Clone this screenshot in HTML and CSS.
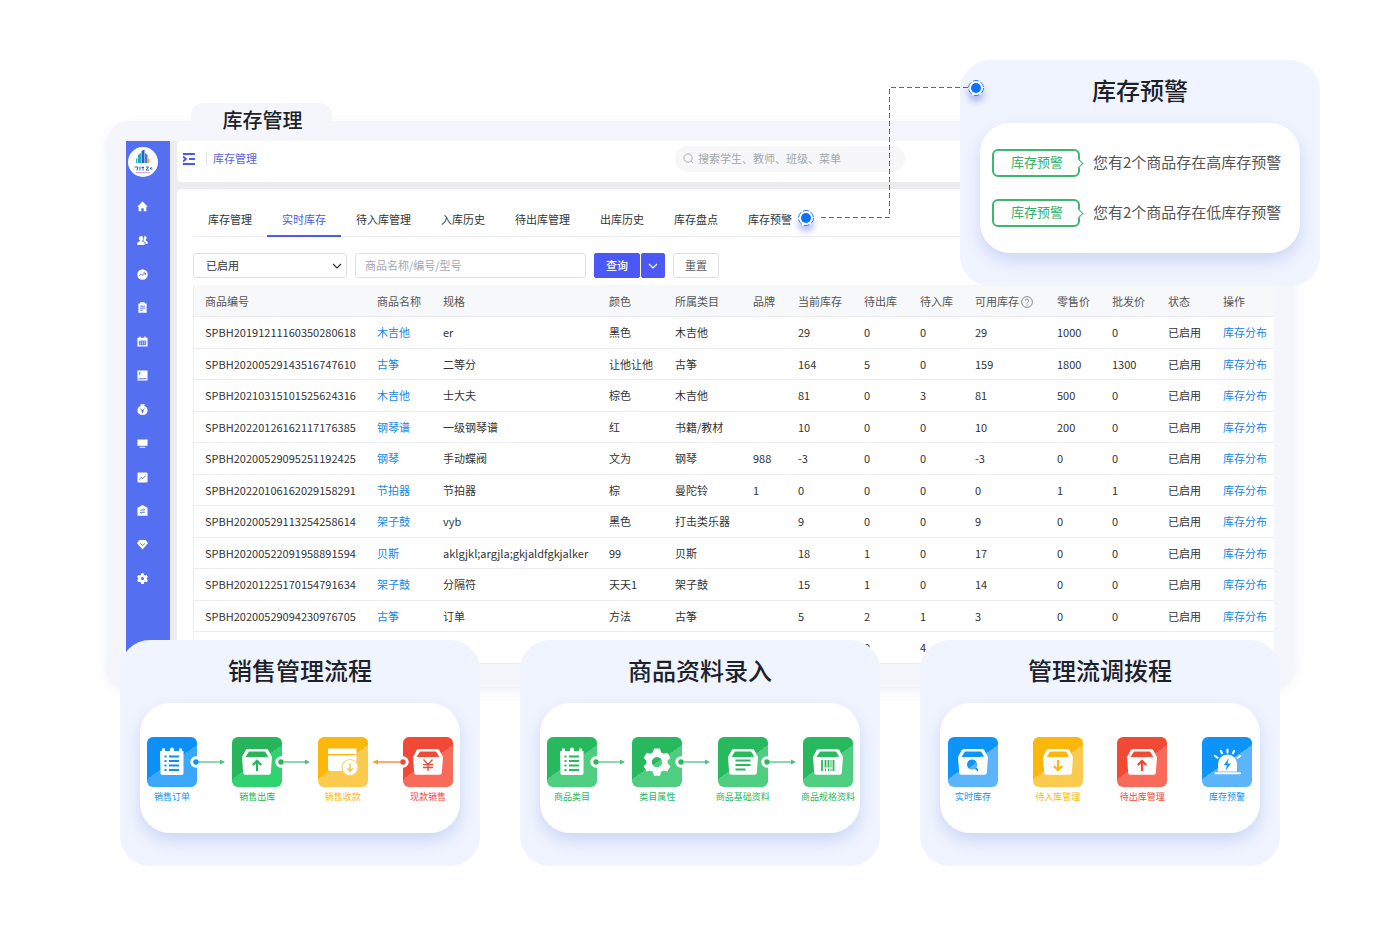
FILE: index.html
```html
<!DOCTYPE html>
<html lang="zh-CN">
<head>
  <meta charset="UTF-8" />
  <meta name="viewport" content="width=device-width, initial-scale=1.0"/>
  <title>库存管理</title>
  <link rel="stylesheet" href="styles.css">
</head>
<body>
  <svg class="defs" aria-hidden="true">
    <symbol id="i-board" viewBox="0 0 50 50">
      <path fill="#fff" d="M13 14h2v-2.500h3V14h5v-1.500a2 2 0 0 1 4 0V14h5v-2.500h3V14h1.500v22a2 2 0 0 1-2 2H15.500a2 2 0 0 1-2-2z"/>
      <path stroke="currentColor" stroke-width="1.800" d="M17.500 19.500h2M17.500 24h2M17.500 28.500h2M17.500 33h2M22 19.500h10M22 24h10M22 28.500h10M22 33h10"/>
    </symbol>
    <symbol id="i-box" viewBox="0 0 50 50">
      <path fill="#fff" fill-rule="evenodd" d="M15.500 12h19a2 2 0 0 1 1.700 1L40 20l-1.200 16a2 2 0 0 1-2 1.800H13.200a2 2 0 0 1-2-1.800L10 20l3.800-7a2 2 0 0 1 1.700-1zM17 14.500l-3.500 5.500h23L33 14.500z"/>
    </symbol>
    <symbol id="i-up" viewBox="0 0 50 50">
      <path fill="none" stroke="currentColor" stroke-width="2.200" d="M25 34V24M20.800 28l4.200-4.300 4.200 4.300"/>
    </symbol>
    <symbol id="i-down" viewBox="0 0 50 50">
      <path fill="none" stroke="currentColor" stroke-width="2.200" d="M25 23v10M20.800 29l4.200 4.300 4.200-4.300"/>
    </symbol>
    <symbol id="i-yen" viewBox="0 0 50 50">
      <path fill="none" stroke="currentColor" stroke-width="1.300" d="M20.500 22.500l4.500 5 4.500-5M20 27.700h10M20 30.500h10M25 27.500V34"/>
    </symbol>
    <symbol id="i-pay" viewBox="0 0 50 50">
      <path fill="#fff" d="M10 11.500h28.500v5.500H10zM10 18.500h28.500V32a2 2 0 0 1-2 2H12a2 2 0 0 1-2-2z"/>
      <circle cx="32" cy="30.500" r="8" fill="#fff" stroke="#fcd36b" stroke-width="1.200"/>
      <path fill="none" stroke="#fcc640" stroke-width="1.500" d="M32 26.500v7.500M29.300 31.500l2.700 2.700 2.700-2.700"/>
    </symbol>
    <symbol id="i-gear" viewBox="0 0 50 50">
      <path fill="#fff" fill-rule="evenodd" d="M22 11.500h6l1 3.800 2.600 1.500 3.800-1.100 3 5.200-2.800 2.700v3l2.800 2.700-3 5.200-3.800-1.100-2.600 1.500-1 3.800h-6l-1-3.800-2.600-1.500-3.800 1.100-3-5.200 2.800-2.700v-3l-2.800-2.700 3-5.200 3.800 1.100 2.600-1.500zM25 19.900a5.200 5.200 0 1 0 0 10.400 5.200 5.200 0 0 0 0-10.400z"/>
    </symbol>
    <symbol id="i-lines" viewBox="0 0 50 50">
      <path stroke="currentColor" stroke-width="1.800" d="M17.500 23.500h15M17.500 28h15M17.500 32.500h10"/>
    </symbol>
    <symbol id="i-bars" viewBox="0 0 50 50">
      <path stroke="currentColor" stroke-width="1.800" d="M19 23v11M22.500 23v7.500M25.500 23v7.500M30.500 23v11"/>
      <path stroke="currentColor" stroke-width="1" d="M28 23v7.500M22.500 31.500V34M25.500 31.500V34M28 31.500V34"/>
    </symbol>
    <symbol id="i-find" viewBox="0 0 50 50">
      <circle cx="24" cy="27.500" r="5" fill="currentColor"/>
      <path fill="#5cb5fa" d="M28.300 25.200a5 5 0 0 1-7.200 6.300z"/>
      <path stroke="currentColor" stroke-width="1.800" d="M27.500 31l2.500 2.500"/>
    </symbol>
    <symbol id="i-alarm" viewBox="0 0 50 50">
      <path fill="#fff" d="M16 34.500V27a9.500 9.500 0 0 1 19 0v7.500z"/>
      <path stroke="#fff" stroke-width="2" stroke-linecap="round" d="M13.500 36.300h24.500M25.500 12.500v3M18.800 13.800l1.200 2.500M32.200 13.800L31 16.300M12.800 18.800l2.700 2M38.200 18.800l-2.700 2"/>
      <path fill="currentColor" d="M26.800 21l-5 7.200h3.200l-1.400 5.600 5.200-7.300h-3.300z"/>
    </symbol>
    <symbol id="i-link" viewBox="0 0 38 12">
      <circle cx="6" cy="6" r="5.700" fill="#fff"/>
      <circle cx="6" cy="6" r="2.700" fill="currentColor"/>
      <path stroke="#5cc49a" stroke-width="1.400" d="M8 6h23"/>
      <path fill="#45c27c" d="M30 3.500l5 2.500-5 2.500z"/>
    </symbol>
    <symbol id="i-link-back" viewBox="0 0 38 12">
      <circle cx="32" cy="6" r="5.700" fill="#fff"/>
      <path stroke="#f28a2e" stroke-width="1.400" d="M6 6h26"/>
      <circle cx="32" cy="6" r="2.700" fill="currentColor"/>
      <path fill="#f5a21f" d="M7 3.500L1.500 6 7 8.500z"/>
    </symbol>
  </svg>

  <main class="stage">
    <h1 class="window-tab">库存管理</h1>

    <section class="window">
      <div class="screen">
        <aside class="sidebar">
          <svg class="logo" viewBox="0 0 30 30" role="img" aria-label="logo">
            <circle cx="15" cy="15" r="15" fill="#fff"/>
            <path fill="#2aa7c9" d="M10 8l3-2v10h-3z"/>
            <path fill="#2461c4" d="M13.500 4l3-1.500V16h-3z"/>
            <path fill="#3b7fdc" d="M17 6l2.500 2v8H17z"/>
            <path fill="#f0a63c" d="M20 11l1.500 1v4H20z"/>
            <path fill="#35c0b0" d="M8 12l1.500-1.500V16H8z"/>
            <path fill="none" stroke="#2f63c8" stroke-width="1" d="M6.500 20h3.500l-1 3.500M12 19.500v4M13.500 20.500h2.500M15 19.500v4M18 20h2.500l-2.500 3h3M23.500 20l-1.200 2h2.200"/>
            <path stroke="#d58bc0" stroke-width=".8" d="M8 25.500h14"/>
          </svg>
          <nav class="side-nav">
            <a href="#" aria-label="首页"><svg viewBox="0 0 12 12"><path d="M6 .5l5.800 5.700h-1.600v5H7.300V8H4.700v3.200H1.800v-5H.2z"/></svg></a>
            <a href="#" aria-label="学员"><svg viewBox="0 0 12 12"><path d="M4.500 1.200a2.500 2.500 0 0 1 1.300 4.600v1l2.500 1.500v2.700H.3V8.500l2.800-1.600V5.800a2.500 2.500 0 0 1 1.400-4.600z"/><path d="M8.300.8a2.300 2.300 0 0 1 1.200 4.200v1l2.200 1.500v2H9.200V8L7 6.500l.3-2z"/></svg></a>
            <a href="#" aria-label="营销"><svg viewBox="0 0 12 12"><circle cx="6" cy="6" r="5.700"/><path class="cut" d="M2.500 7.300l2-2 1.800 1.800 2.500-2.500M6.800 4.300h2.400v2.300"/></svg></a>
            <a href="#" aria-label="教务"><svg viewBox="0 0 12 12"><path d="M1.500 1.500h2V.3h5v1.200h2v10.300h-9z"/><path class="cut" d="M3.300 4.500h5.400M3.300 6.700h5.400M3.300 9h3"/></svg></a>
            <a href="#" aria-label="课表"><svg viewBox="0 0 12 12"><path d="M.5 2h2V.5h1.500V2h4V.5h1.500V2h2v9.500H.5z"/><path class="cut" d="M2.500 5.500h7v4h-7zM2.500 7.500h7M4.800 5.500v4M7.200 5.500v4"/></svg></a>
            <a href="#" aria-label="课程"><svg viewBox="0 0 12 12"><path d="M.5.5h11v11h-11z"/><path class="cut" d="M3 2v3.500M1.500 9.500h9"/></svg></a>
            <a href="#" aria-label="财务"><svg viewBox="0 0 12 12"><path d="M3.500.3h5L7.800 2.300A5 5 0 0 1 11.500 7c0 3-2 5-5.500 5S.5 10 .5 7a5 5 0 0 1 3.700-4.700z"/><path class="cut" d="M3.800 5L6 7.300 8.200 5M6 7v3M4.300 7.500h3.400"/></svg></a>
            <a href="#" aria-label="设备"><svg viewBox="0 0 12 12"><path d="M.5 1.500h11v7h-11zM3 9.500h6v1.200H3z"/></svg></a>
            <a href="#" aria-label="报表"><svg viewBox="0 0 12 12"><rect x=".5" y=".5" width="11" height="11" rx="1.500"/><path class="cut" d="M2.500 8l2-2 1.800 1L9.500 4"/></svg></a>
            <a href="#" aria-label="库存"><svg viewBox="0 0 12 12"><path d="M6 0l5.500 3v8.700H.5V3z"/><path class="cut" d="M3.500 5.500h5L7 4M8.500 8h-5L5 9.500"/></svg></a>
            <a href="#" aria-label="会员"><svg viewBox="0 0 12 12"><path d="M2.500 1h7L12 4.500 6 11.500 0 4.500z"/><path class="cut" d="M3.500 4.800L6 7.200l2.500-2.400"/></svg></a>
            <a href="#" aria-label="设置"><svg viewBox="0 0 12 12"><path fill-rule="evenodd" d="M4.700.2h2.600l.4 1.700 1.200.7 1.700-.5 1.300 2.200L10.700 5.400v1.300l1.200 1.200-1.300 2.200-1.700-.5-1.200.7-.4 1.600H4.700l-.4-1.600-1.200-.7-1.700.5L.1 7.900l1.200-1.200V5.400L.1 4.300l1.300-2.200 1.700.5 1.200-.7zM6 4.300a1.700 1.700 0 1 0 0 3.400 1.700 1.700 0 0 0 0-3.400z"/></svg></a>
          </nav>
        </aside>

        <div class="content">
          <header class="topbar">
            <svg class="fold" viewBox="0 0 12 12" aria-hidden="true"><path d="M0 1h12M6 6h6M0 11h12M0 3.500L2.800 6 0 8.500"/></svg>
            <span class="crumb">库存管理</span>
            <label class="search">
              <svg viewBox="0 0 12 12" aria-hidden="true"><circle cx="5.500" cy="5.500" r="4.500"/><path d="M9 9l2 2"/></svg>
              <input type="search" placeholder="搜索学生、教师、班级、菜单" aria-label="搜索">
            </label>
          </header>

          <div class="panel">
            <nav class="tabs">
              <a href="#">库存管理</a>
              <a href="#" class="active">实时库存</a>
              <a href="#">待入库管理</a>
              <a href="#">入库历史</a>
              <a href="#">待出库管理</a>
              <a href="#">出库历史</a>
              <a href="#">库存盘点</a>
              <a href="#">库存预警</a>
            </nav>

            <form class="filters">
              <div class="select">
                <select aria-label="状态"><option>已启用</option><option>已停用</option></select>
                <svg viewBox="0 0 10 6" aria-hidden="true"><path d="M1 1l4 4 4-4"/></svg>
              </div>
              <input class="keyword" type="text" placeholder="商品名称/编号/型号" aria-label="商品名称/编号/型号">
              <div class="btn-group">
                <button type="button" class="btn primary">查询</button>
                <button type="button" class="btn primary more" aria-label="更多"><svg viewBox="0 0 10 6"><path d="M1 1l4 4 4-4"/></svg></button>
              </div>
              <button type="reset" class="btn">重置</button>
            </form>

            <table class="stock">
              <colgroup>
                <col class="c-code"><col class="c-name"><col class="c-spec"><col class="c-color"><col class="c-type"><col class="c-brand"><col class="c-now"><col class="c-num"><col class="c-in"><col class="c-free"><col class="c-in"><col class="c-num"><col class="c-in"><col class="c-act">
              </colgroup>
              <thead>
                <tr><th>商品编号</th><th>商品名称</th><th>规格</th><th>颜色</th><th>所属类目</th><th>品牌</th><th>当前库存</th><th>待出库</th><th>待入库</th><th>可用库存<svg class="help" viewBox="0 0 12 12" aria-hidden="true"><circle cx="6" cy="6" r="5.400"/><path d="M4.300 4.700a1.700 1.700 0 1 1 2.500 1.500Q6 6.700 6 7.500M6 8.500v1"/></svg></th><th>零售价</th><th>批发价</th><th>状态</th><th>操作</th></tr>
              </thead>
              <tbody>
                <tr><td>SPBH20191211160350280618</td><td><a href="#">木吉他</a></td><td>er</td><td>黑色</td><td>木吉他</td><td></td><td>29</td><td>0</td><td>0</td><td>29</td><td>1000</td><td>0</td><td>已启用</td><td><a href="#">库存分布</a></td></tr>
                <tr><td>SPBH20200529143516747610</td><td><a href="#">古筝</a></td><td>二等分</td><td>让他让他</td><td>古筝</td><td></td><td>164</td><td>5</td><td>0</td><td>159</td><td>1800</td><td>1300</td><td>已启用</td><td><a href="#">库存分布</a></td></tr>
                <tr><td>SPBH20210315101525624316</td><td><a href="#">木吉他</a></td><td>士大夫</td><td>棕色</td><td>木吉他</td><td></td><td>81</td><td>0</td><td>3</td><td>81</td><td>500</td><td>0</td><td>已启用</td><td><a href="#">库存分布</a></td></tr>
                <tr><td>SPBH20220126162117176385</td><td><a href="#">钢琴谱</a></td><td>一级钢琴谱</td><td>红</td><td>书籍/教材</td><td></td><td>10</td><td>0</td><td>0</td><td>10</td><td>200</td><td>0</td><td>已启用</td><td><a href="#">库存分布</a></td></tr>
                <tr><td>SPBH20200529095251192425</td><td><a href="#">钢琴</a></td><td>手动蝶阀</td><td>文为</td><td>钢琴</td><td>988</td><td>-3</td><td>0</td><td>0</td><td>-3</td><td>0</td><td>0</td><td>已启用</td><td><a href="#">库存分布</a></td></tr>
                <tr><td>SPBH20220106162029158291</td><td><a href="#">节拍器</a></td><td>节拍器</td><td>棕</td><td>曼陀铃</td><td>1</td><td>0</td><td>0</td><td>0</td><td>0</td><td>1</td><td>1</td><td>已启用</td><td><a href="#">库存分布</a></td></tr>
                <tr><td>SPBH20200529113254258614</td><td><a href="#">架子鼓</a></td><td>vyb</td><td>黑色</td><td>打击类乐器</td><td></td><td>9</td><td>0</td><td>0</td><td>9</td><td>0</td><td>0</td><td>已启用</td><td><a href="#">库存分布</a></td></tr>
                <tr><td>SPBH20200522091958891594</td><td><a href="#">贝斯</a></td><td>aklgjkl;argjla;gkjaldfgkjalker</td><td>99</td><td>贝斯</td><td></td><td>18</td><td>1</td><td>0</td><td>17</td><td>0</td><td>0</td><td>已启用</td><td><a href="#">库存分布</a></td></tr>
                <tr><td>SPBH20201225170154791634</td><td><a href="#">架子鼓</a></td><td>分隔符</td><td>天天1</td><td>架子鼓</td><td></td><td>15</td><td>1</td><td>0</td><td>14</td><td>0</td><td>0</td><td>已启用</td><td><a href="#">库存分布</a></td></tr>
                <tr><td>SPBH20200529094230976705</td><td><a href="#">古筝</a></td><td>订单</td><td>方法</td><td>古筝</td><td></td><td>5</td><td>2</td><td>1</td><td>3</td><td>0</td><td>0</td><td>已启用</td><td><a href="#">库存分布</a></td></tr>
                <tr><td></td><td></td><td></td><td></td><td></td><td></td><td></td><td>9</td><td>4</td><td></td><td></td><td></td><td></td><td></td></tr>
              </tbody>
            </table>
          </div>
        </div>
      </div>
    </section>

    <section class="card alert">
      <h2>库存预警</h2>
      <div class="card-body notices">
        <p><span class="tag">库存预警</span>您有2个商品存在高库存预警</p>
        <p><span class="tag">库存预警</span>您有2个商品存在低库存预警</p>
      </div>
      <!-- dashed line from the last tab to this card -->
      <svg class="connector" viewBox="0 0 200 180" aria-hidden="true">
        <path class="wire" d="M31 147.500H99.500V17.500H178"/>
        <circle class="halo" cx="16" cy="148" r="8"/>
        <circle class="ring" cx="16" cy="148" r="7.500"/>
        <circle class="dot" cx="16" cy="148" r="5"/>
        <circle class="halo" cx="186" cy="18" r="8"/>
        <circle class="ring" cx="186" cy="18" r="7.500"/>
        <circle class="dot" cx="186" cy="18" r="5"/>
      </svg>
    </section>

    <div class="cards">
      <section class="card">
        <h2>销售管理流程</h2>
        <div class="card-body flow">
          <div class="step blue">
            <div class="tile"><svg><use href="#i-board"/></svg><svg class="link"><use href="#i-link"/></svg></div>
            <span>销售订单</span>
          </div>
          <div class="step green">
            <div class="tile"><svg><use href="#i-box"/><use href="#i-up"/></svg><svg class="link"><use href="#i-link"/></svg></div>
            <span>销售出库</span>
          </div>
          <div class="step yellow">
            <div class="tile"><svg><use href="#i-pay"/></svg></div>
            <span>销售收款</span>
          </div>
          <div class="step red">
            <div class="tile"><svg><use href="#i-box"/><use href="#i-yen"/></svg><svg class="link back"><use href="#i-link-back"/></svg></div>
            <span>现款销售</span>
          </div>
        </div>
      </section>

      <section class="card">
        <h2>商品资料录入</h2>
        <div class="card-body flow">
          <div class="step mint">
            <div class="tile"><svg><use href="#i-board"/></svg><svg class="link"><use href="#i-link"/></svg></div>
            <span>商品类目</span>
          </div>
          <div class="step mint">
            <div class="tile"><svg><use href="#i-gear"/></svg><svg class="link"><use href="#i-link"/></svg></div>
            <span>类目属性</span>
          </div>
          <div class="step mint">
            <div class="tile"><svg><use href="#i-box"/><use href="#i-lines"/></svg><svg class="link"><use href="#i-link"/></svg></div>
            <span>商品基础资料</span>
          </div>
          <div class="step mint">
            <div class="tile"><svg><use href="#i-box"/><use href="#i-bars"/></svg></div>
            <span>商品规格资料</span>
          </div>
        </div>
      </section>

      <section class="card">
        <h2>管理流调拨程</h2>
        <div class="card-body flow loose">
          <div class="step sky">
            <div class="tile"><svg><use href="#i-box"/><use href="#i-find"/></svg></div>
            <span>实时库存</span>
          </div>
          <div class="step yellow">
            <div class="tile"><svg><use href="#i-box"/><use href="#i-down"/></svg></div>
            <span>待入库管理</span>
          </div>
          <div class="step red">
            <div class="tile"><svg><use href="#i-box"/><use href="#i-up"/></svg></div>
            <span>待出库管理</span>
          </div>
          <div class="step sky">
            <div class="tile"><svg><use href="#i-alarm"/></svg></div>
            <span>库存预警</span>
          </div>
        </div>
      </section>
    </div>
  </main>
</body>
</html>
```
FILE: styles.css
```css
:root {
  --frame: #f5f6fb;
  --card: #f0f4fe;
  --side: #5470f1;
  --primary: #4b58f5;
  --link: #1487e8;
  --line: #ebedf2;
}

* {
  box-sizing: border-box;
}

body {
  margin: 0;
  background: #fff;
  color: #333;
  font-family: "Noto Sans CJK SC", "Noto Sans", sans-serif;
  font-size: 11px;
}

a {
  color: inherit;
  text-decoration: none;
}

button, input, select {
  font: inherit;
  color: inherit;
}

.defs {
  display: none;
}

.stage {
  position: relative;
  padding: 103px 106px 60px 107px;
}

/* window */
.window-tab {
  position: relative;
  z-index: 1;
  width: 141px;
  height: 38px;
  margin: 0 0 -20px 84px;
  padding-left: 2px;
  border-radius: 12px 12px 0 0;
  background: var(--frame);
  color: #1d2129;
  font-size: 20px;
  font-weight: 500;
  line-height: 34px;
  text-align: center;
}

.window {
  padding: 20px 20px 23px 19px;
  border-radius: 22px;
  background: var(--frame);
  box-shadow: 0 4px 12px rgba(110, 120, 200, 0.12);
}

.screen {
  display: flex;
  background: #ececee;
}

.sidebar {
  flex: none;
  width: 44px;
  padding-top: 6px;
  background: var(--side);
}

.logo {
  display: block;
  width: 30px;
  height: 30px;
  margin-left: 2px;
}

.side-nav {
  display: flex;
  flex-direction: column;
  justify-content: space-between;
  align-items: center;
  width: 33px;
  height: 383px;
  margin-top: 24px;
}

.side-nav svg {
  display: block;
  width: 11px;
  height: 11px;
  fill: #fff;
}

.side-nav .cut {
  fill: none;
  stroke: var(--side);
}

.content {
  flex: 1;
  min-width: 0;
  margin-left: 7px;
}

.topbar {
  display: flex;
  align-items: center;
  height: 41px;
  padding: 0 6px 6px;
  border-radius: 4px;
  background: #fff;
}

.fold {
  width: 12px;
  height: 12px;
  fill: none;
  stroke: var(--primary);
  stroke-width: 2;
}

.crumb {
  margin-left: 11px;
  padding: 0 0 2px 6px;
  border-left: 1px solid #e3e3ea;
  color: #5a5fe0;
  line-height: 12px;
}

.search {
  display: flex;
  align-items: center;
  gap: 4px;
  width: 230px;
  height: 26px;
  margin-left: 418px;
  padding-left: 8px;
  border-radius: 13px;
  background: #f7f7f9;
}

.search svg {
  width: 11px;
  height: 11px;
  fill: none;
  stroke: #aaa;
}

.search input {
  flex: 1;
  min-width: 0;
  padding: 0 0 2px;
  border: 0;
  outline: 0;
  background: none;
}

::placeholder {
  color: #a4a7ad;
  opacity: 1;
}

.panel {
  margin-top: 7px;
  padding: 13px 0 0 16px;
  border-radius: 4px 4px 0 0;
  background: #fff;
}

.tabs {
  display: flex;
  border-bottom: 1px solid var(--line);
}

.tabs a {
  height: 35px;
  padding: 0 15px;
  margin-bottom: -1px;
  line-height: 34px;
}

.tabs .active {
  border-bottom: 2px solid var(--primary);
  color: var(--primary);
}

.filters {
  display: flex;
  gap: 8px;
  height: 25px;
  margin: 16px 0 7px;
}

.select {
  position: relative;
  width: 154px;
}

.select select {
  appearance: none;
  width: 100%;
  height: 100%;
  padding: 0 12px 2px;
  border: 1px solid #dcdfe6;
  border-radius: 3px;
  background: #fff;
}

.select svg, .more svg {
  width: 10px;
  height: 6px;
  fill: none;
  stroke: #333;
  stroke-width: 1.2;
}

.select svg {
  position: absolute;
  right: 5px;
  top: 10px;
}

.keyword {
  width: 231px;
  padding: 0 9px 2px;
  border: 1px solid #dcdfe6;
  border-radius: 3px;
}

.btn-group {
  display: flex;
  gap: 1px;
}

.btn {
  width: 46px;
  padding: 0 0 2px;
  border: 1px solid #dcdfe6;
  border-radius: 3px;
  background: #fff;
  color: #606266;
  cursor: pointer;
}

.btn.primary {
  border-color: var(--primary);
  border-radius: 2px;
  background: var(--primary);
  color: #fff;
  font-weight: 500;
}

.btn.more {
  width: 24px;
  padding: 0;
}

.more svg {
  display: block;
  margin: 0 auto;
  stroke: #fff;
}

/* stock table */
.stock {
  width: 100%;
  border-collapse: separate;
  border-spacing: 0;
  border-left: 1px solid var(--line);
  table-layout: fixed;
}

.c-code { width: 172px; }
.c-name { width: 66px; }
.c-spec { width: 166px; }
.c-color { width: 66px; }
.c-type { width: 78px; }
.c-brand { width: 45px; }
.c-now { width: 66px; }
.c-num { width: 56px; }
.c-in { width: 55px; }
.c-free { width: 82px; }
.c-act { width: 62px; }

.stock th, .stock td {
  height: 32px;
  padding: 0 0 0 11px;
  border-bottom: 1px solid var(--line);
  text-align: left;
  white-space: nowrap;
  line-height: 16px;
}

.stock td {
  padding-bottom: 2px;
}

.stock tr:nth-child(even) td {
  height: 31px;
  padding-bottom: 1px;
}

.stock th {
  background: #f7f8fa;
  color: #555;
  font-weight: 400;
}

.stock td a {
  color: var(--link);
}

.help {
  width: 12px;
  height: 12px;
  margin-left: 2px;
  vertical-align: -2px;
  fill: none;
  stroke: #888;
}

/* cards */
.card {
  padding: 0 20px 33px;
  border-radius: 30px;
  background: var(--card);
}

.card h2 {
  margin: 0 0 3px;
  color: #1d2129;
  font-size: 24px;
  font-weight: 500;
  line-height: 60px;
  text-align: center;
}

.card-body {
  height: 130px;
  border-radius: 30px;
  background: #fff;
  box-shadow: 0 8px 16px rgba(84, 112, 220, 0.22);
}

.cards {
  position: relative;
  display: grid;
  grid-template-columns: repeat(3, 1fr);
  gap: 40px;
  margin: -47px 14px 0 13px;
}

.alert {
  position: absolute;
  z-index: 2;
  top: 60px;
  right: 80px;
  width: 360px;
}

.notices {
  display: flex;
  flex-direction: column;
  justify-content: center;
  gap: 22px;
  padding-left: 12px;
}

.notices p {
  display: flex;
  gap: 13px;
  margin: 0;
  color: #555;
  font-size: 15px;
  line-height: 26px;
  white-space: nowrap;
}

.tag {
  position: relative;
  width: 88px;
  height: 28px;
  padding-left: 2px;
  border: 2px solid #3cb670;
  border-radius: 6px;
  color: #35ad67;
  font-size: 13px;
  line-height: 22px;
  text-align: center;
}

.tag::after {
  content: "";
  position: absolute;
  right: -4px;
  top: 9px;
  width: 6px;
  height: 6px;
  border-top: 1px solid #3cb670;
  border-right: 1px solid #3cb670;
  background: #fff;
  transform: rotate(45deg);
}

.connector {
  position: absolute;
  left: -170px;
  top: 10px;
  width: 200px;
  height: 180px;
}

.wire {
  fill: none;
  stroke: #1f6ff0;
  stroke-dasharray: 5 3;
}

.halo {
  fill: #fff;
  filter: drop-shadow(0 6px 3px rgba(60, 80, 220, 0.35));
}

.ring {
  fill: none;
  stroke: #1b7af5;
  stroke-dasharray: 6 2;
}

.dot {
  fill: #0b72fb;
}

/* process steps */
.flow {
  display: flex;
  justify-content: space-between;
  padding: 34px 7px 0;
}

.flow.loose {
  padding: 34px 8px 0;
}

.step {
  display: flex;
  flex-direction: column;
  align-items: center;
  width: 50px;
  color: var(--dark);
  font-size: 9px;
  line-height: 12px;
  white-space: nowrap;
}

.step span {
  margin-top: 4px;
}

.tile {
  position: relative;
  width: 50px;
  height: 50px;
  border-radius: 6px;
  background: linear-gradient(146deg, var(--dark) 50%, var(--light) 50%);
}

.tile svg {
  display: block;
  width: 50px;
  height: 50px;
}

.tile .link {
  position: absolute;
  left: 43px;
  top: 19px;
  width: 38px;
  height: 12px;
}

.tile .link.back {
  left: -32px;
}

.blue { --dark: #0c90f5; --light: #3aa7fa; }
.sky { --dark: #0c94f8; --light: #5cb5fa; }
.green { --dark: #28b45a; --light: #31d272; }
.mint { --dark: #28b85d; --light: #4fce82; }
.yellow { --dark: #fcb70c; --light: #fbcb50; }
.red { --dark: #f04a36; --light: #f86a5a; }
```
